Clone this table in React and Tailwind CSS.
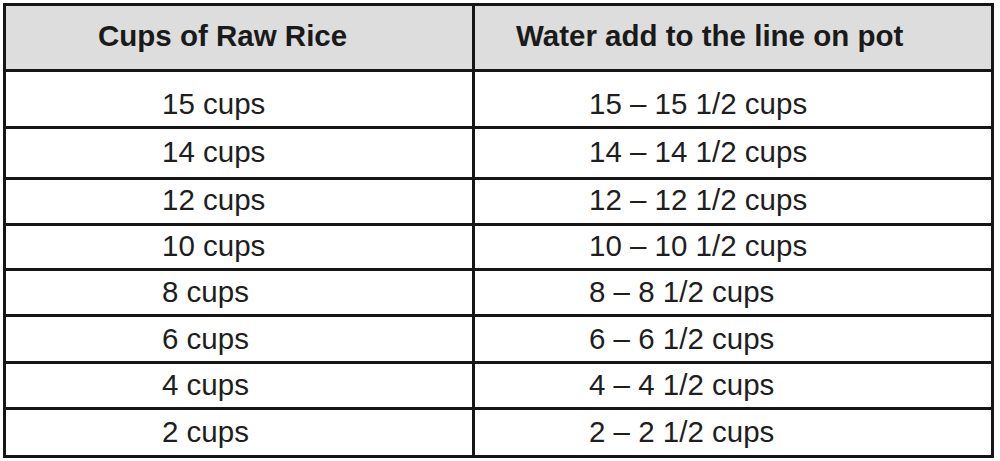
const rows = [
  { raw: '15 cups', water: '15 – 15 1/2 cups', h: 'h-[57px]', pt: 'pt-[15px]' },
  { raw: '14 cups', water: '14 – 14 1/2 cups', h: 'h-[51px]', pt: 'pt-[6px]' },
  { raw: '12 cups', water: '12 – 12 1/2 cups', h: 'h-[46px]', pt: 'pt-[3px]' },
  { raw: '10 cups', water: '10 – 10 1/2 cups', h: 'h-[45px]', pt: 'pt-[3px]' },
  { raw: '8 cups', water: '8 – 8 1/2 cups', h: 'h-[46px]', pt: 'pt-[4px]' },
  { raw: '6 cups', water: '6 – 6 1/2 cups', h: 'h-[47px]', pt: 'pt-[5px]' },
  { raw: '4 cups', water: '4 – 4 1/2 cups', h: 'h-[46px]', pt: 'pt-[4px]' },
  { raw: '2 cups', water: '2 – 2 1/2 cups', h: 'h-[48px]', pt: 'pt-[5px]' },
];

export default function App() {
  return (
    <div className="w-[1000px] h-[461px] bg-white pt-[3px] pl-[3px] font-['Liberation_Sans',Arial,sans-serif] text-[29.5px] leading-[33px] text-[#1e1e1e]">
      <div className="w-[991px] border-[3px] border-[#161616]">
        {/* Header */}
        <div className="grid grid-cols-[466px_519px] h-[63px] bg-[#dcdddc] font-bold text-[#1a1a1a]">
          <div className="pl-[92px] pt-[13px]">Cups of Raw Rice</div>
          <div className="border-l-[3px] border-[#161616] pl-[41px] pt-[13px]">Water add to the line on pot</div>
        </div>

        {/* Body */}
        {rows.map((r) => (
          <div key={r.raw} className={`grid grid-cols-[466px_519px] border-t-[3px] border-[#161616] ${r.h}`}>
            <div className={`pl-[156px] ${r.pt}`}>{r.raw}</div>
            <div className={`border-l-[3px] border-[#161616] pl-[114px] ${r.pt}`}>{r.water}</div>
          </div>
        ))}
      </div>
    </div>
  );
}
